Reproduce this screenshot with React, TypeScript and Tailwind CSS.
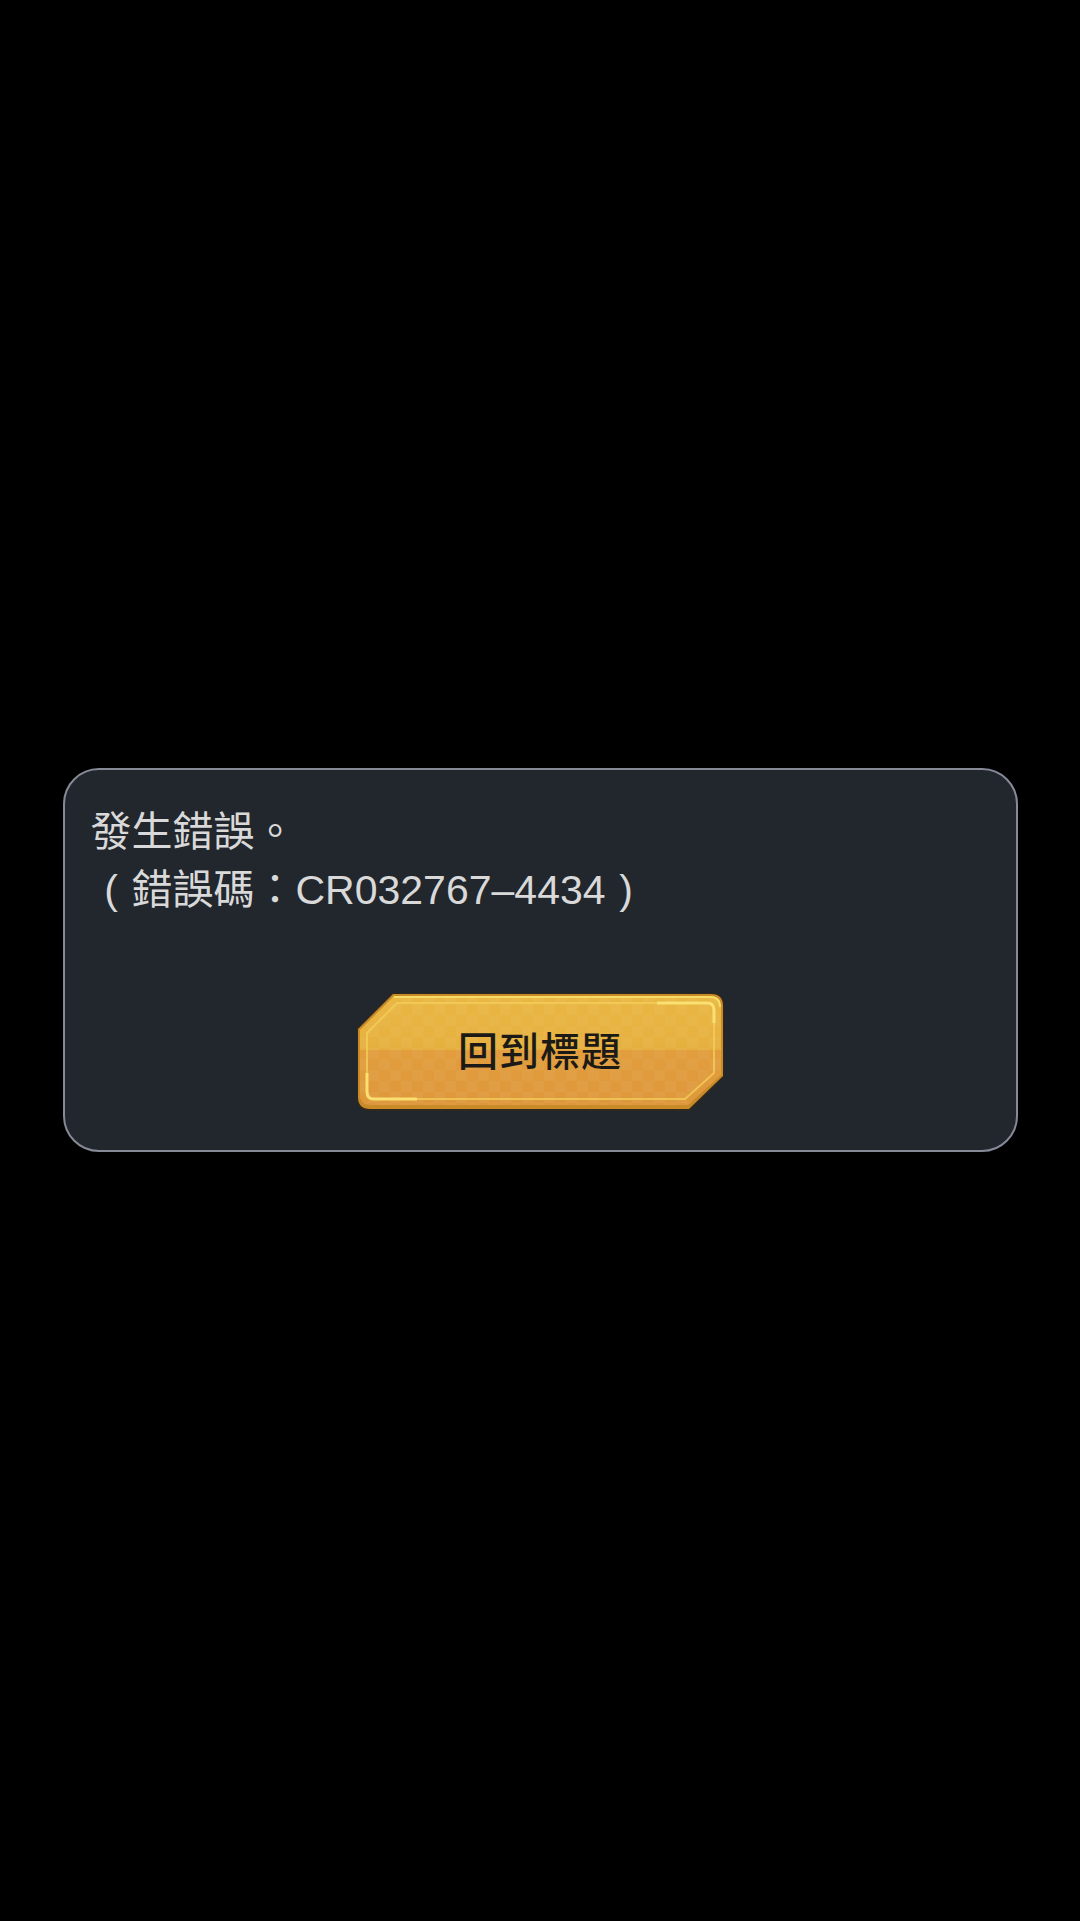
import React from 'react';

function TitleButton({ label }: { label: string }) {
  return (
    <button className="relative w-[367px] h-[118px] flex items-center justify-center">
      <svg className="absolute inset-0" width="367" height="118" viewBox="0 0 367 118" fill="none">
        <defs>
          <linearGradient id="btnFill" x1="0" y1="0" x2="0" y2="1">
            <stop offset="0" stopColor="#e9b744" />
            <stop offset="0.49" stopColor="#e6b03f" />
            <stop offset="0.5" stopColor="#e29d3d" />
            <stop offset="1" stopColor="#de983c" />
          </linearGradient>
          <pattern id="checker" width="22" height="22" patternUnits="userSpaceOnUse">
            <rect width="11" height="11" fill="#ffffff" opacity="0.04" />
            <rect x="11" y="11" width="11" height="11" fill="#ffffff" opacity="0.04" />
          </pattern>
        </defs>
        {/* dark outline */}
        <path
          d="M35 0 H355 Q367 0 367 12 V84 L333 118 H12 Q0 118 0 106 V35 Z"
          fill="#3a2a12"
          opacity="0.55"
        />
        {/* rim */}
        <path
          d="M36 1 H354 Q366 1 366 13 V83 L332 116 H13 Q1 116 1 104 V36 Z"
          fill="#c98a28"
        />
        {/* body */}
        <path
          d="M37 3 H353 Q364 3 364 14 V82 L331 112 H14 Q3 112 3 101 V37 Z"
          fill="url(#btnFill)"
        />
        <path
          d="M37 3 H353 Q364 3 364 14 V82 L331 112 H14 Q3 112 3 101 V37 Z"
          fill="url(#checker)"
        />
        {/* top highlight */}
        <path d="M37 4 H353 Q363 4 363 14" stroke="#f7dc66" strokeWidth="2" />
        {/* inner line */}
        <path
          d="M40 10 H350 Q357 10 357 17 V80 L328 106 H17 Q10 106 10 99 V40 Z"
          stroke="#f4cf5a"
          strokeWidth="2"
          opacity="0.75"
        />
        <path d="M10 80 V99 Q10 106 17 106 H60" stroke="#f9e070" strokeWidth="3" />
        <path d="M300 10 H350 Q357 10 357 17 V30" stroke="#f9e070" strokeWidth="3" />
      </svg>
      <span className="relative text-[40px] leading-none text-[#1c1a17] font-medium tracking-[1px]">
        {label}
      </span>
    </button>
  );
}

// full-width bracket with the glyph centred in its cell
function Paren({ ch }: { ch: string }) {
  return <span className="inline-block w-[41px] text-center">{ch}</span>;
}

export default function App() {
  return (
    <div
      className="w-[1080px] h-[1921px] bg-black flex flex-col items-center pt-[768px]"
      style={{ fontFamily: '"Liberation Sans", "Noto Sans CJK TC", sans-serif' }}
    >
      <div className="w-[955px] h-[384px] bg-[#22272e] border-2 border-[#878a96] rounded-[36px] flex flex-col pt-[33px] pl-[26px]">
        <div className="text-[41px] leading-[58px] text-[#d9d9d9]">
          <p>發生錯誤。</p>
          <p>
            <Paren ch="(" />錯誤碼：CR032767–4434<Paren ch=")" />
          </p>
        </div>
        <div className="flex justify-center mt-[74px] -ml-[26px]">
          <TitleButton label="回到標題" />
        </div>
      </div>
    </div>
  );
}
